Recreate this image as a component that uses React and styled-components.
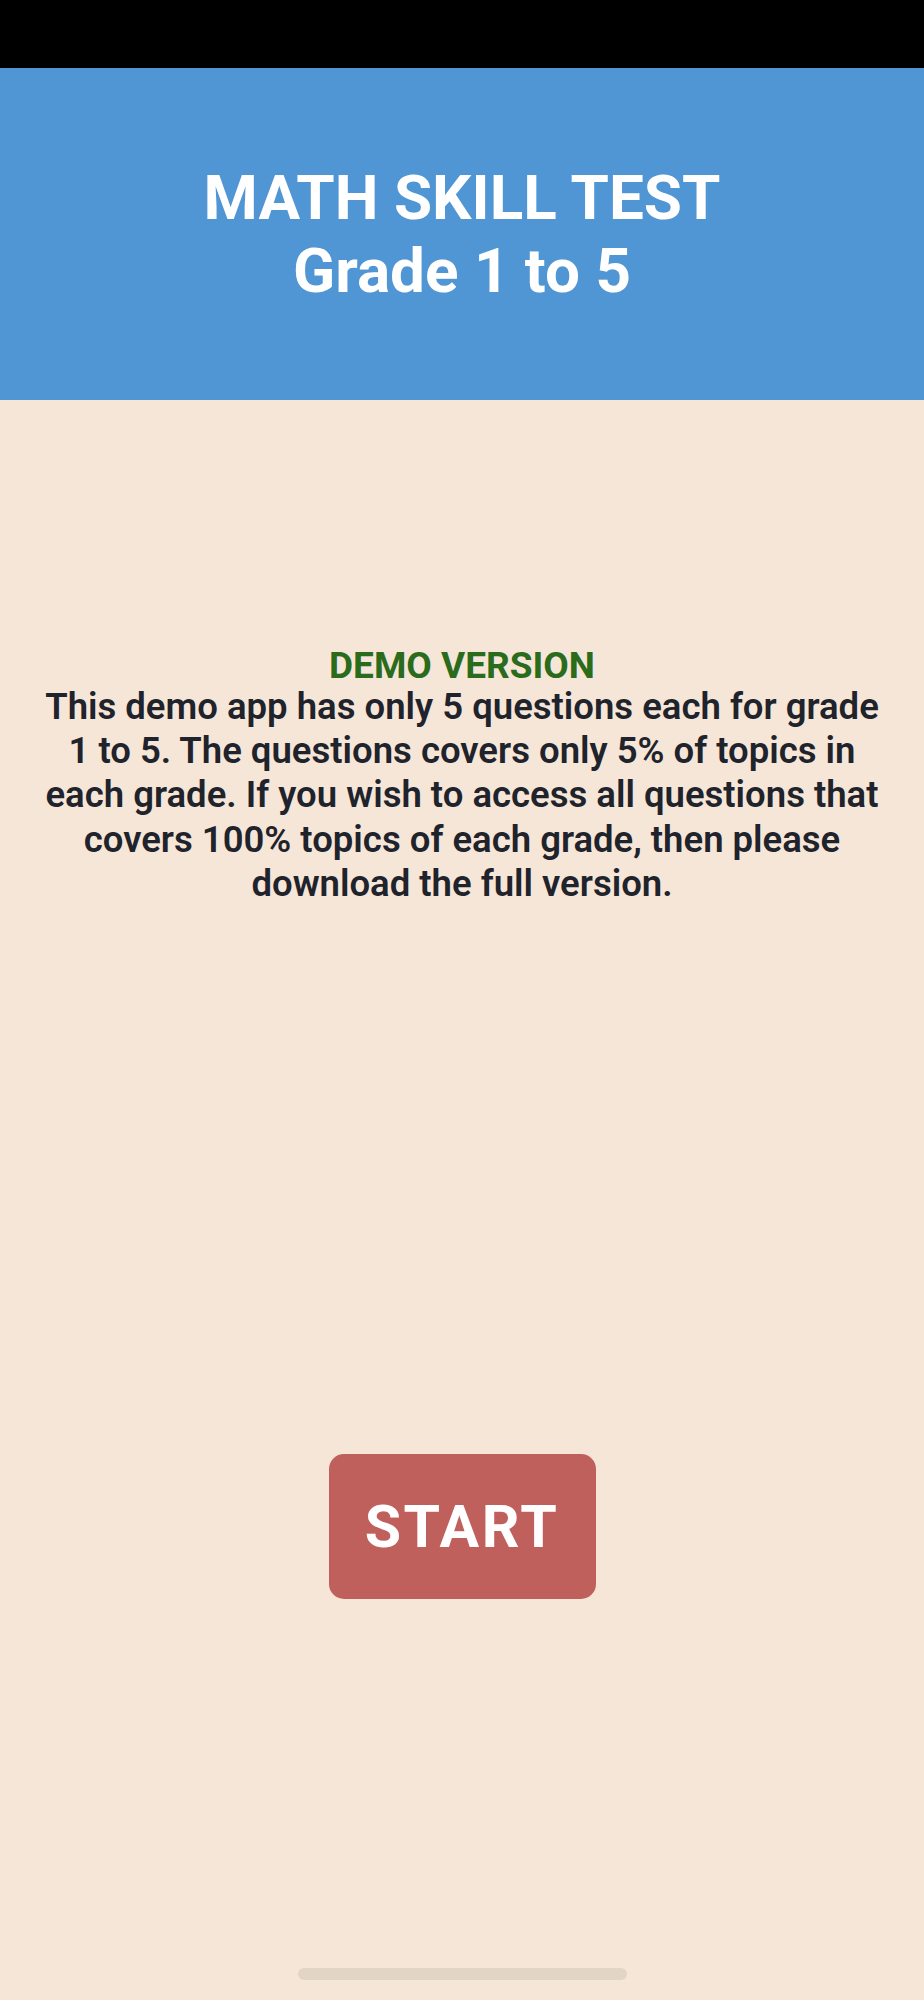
import styled, { createGlobalStyle } from 'styled-components';

const GlobalStyle = createGlobalStyle`
  html, body {
    margin: 0;
    padding: 0;
    background: #f6e6d8;
  }
  * {
    box-sizing: border-box;
  }
`;

export default function App() {
  return (
    <Screen>
      <GlobalStyle />
      <StatusBar />
      <Header>
        <Title>MATH SKILL TEST</Title>
        <Title>Grade 1 to 5</Title>
      </Header>
      <Body>
        <Notice>
          <NoticeTitle>DEMO VERSION</NoticeTitle>
          <NoticeText>
            This demo app has only 5 questions each for grade<br />
            1 to 5. The questions covers only 5% of topics in<br />
            each grade. If you wish to access all questions that<br />
            covers 100% topics of each grade, then please<br />
            download the full version.
          </NoticeText>
        </Notice>
        <StartButton type="button">START</StartButton>
      </Body>
      <HomeIndicator />
    </Screen>
  );
}

const Screen = styled.div`
  min-height: 2000px;
  display: flex;
  flex-direction: column;
  background: #f6e6d8;
  font-family: Roboto, 'Liberation Sans', sans-serif;
`;

const StatusBar = styled.div`
  height: 68px;
  background: #000;
`;

const Header = styled.header`
  height: 332px;
  background: #5095d4;
  display: flex;
  flex-direction: column;
  align-items: center;
  justify-content: center;
`;

const Title = styled.h1`
  margin: 0;
  color: #fff;
  font-size: 62px;
  font-weight: 700;
  line-height: 73px;
`;

const Body = styled.main`
  display: flex;
  flex-direction: column;
  align-items: center;
  padding: 0 20px;
`;

const Notice = styled.section`
  margin-top: 246px;
  text-align: center;
  white-space: nowrap;
`;

const NoticeTitle = styled.div`
  color: #2a6b1c;
  font-size: 37px;
  font-weight: 700;
  line-height: 39px;
`;

const NoticeText = styled.p`
  margin: 0;
  color: #1f232b;
  font-size: 36.5px;
  font-weight: 600;
  line-height: 44.2px;
`;

const StartButton = styled.button`
  margin-top: 548px;
  width: 267px;
  height: 145px;
  padding: 0;
  border: none;
  border-radius: 15px;
  background: #bf605c;
  color: #fff;
  font-family: Roboto, 'Liberation Sans', sans-serif;
  font-size: 59px;
  font-weight: 700;
  letter-spacing: 2.5px;
  cursor: pointer;
`;

const HomeIndicator = styled.div`
  margin: auto auto 20px;
  width: 329px;
  height: 12px;
  border-radius: 6px;
  background: #e3d5c6;
`;
